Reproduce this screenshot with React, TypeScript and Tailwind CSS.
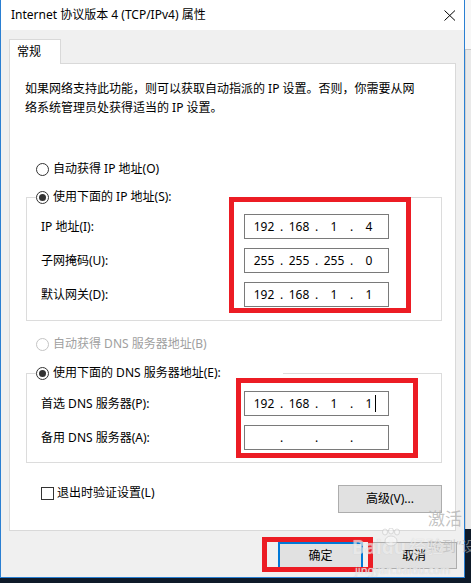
import React, { Fragment } from "react";

function Radio({ checked, disabled }: { checked?: boolean; disabled?: boolean }) {
  return (
    <span
      className={
        "w-[13px] h-[13px] rounded-full border bg-white flex items-center justify-center shrink-0 " +
        (disabled ? "border-[#c4c4c4]" : "border-[#333333]")
      }
    >
      {checked ? <span className="w-[7px] h-[7px] rounded-full bg-[#333333]" /> : null}
    </span>
  );
}

function IpBox({ parts, cursor }: { parts: string[]; cursor?: boolean }) {
  return (
    <div className="w-[145px] h-[25px] border border-[#7a7a7a] bg-white flex items-center pl-[5px] text-[12px] leading-[16px] text-black">
      {parts.map((p, i) => (
        <Fragment key={i}>
          <span className="w-[28px] flex justify-center">
            <span className="relative">
              {p}
              {cursor && i === 3 ? (
                <span className="absolute right-[-4px] top-[-1px] w-px h-[17px] bg-black" />
              ) : null}
            </span>
          </span>
          {i < 3 ? <span className="w-[7px] text-center">.</span> : null}
        </Fragment>
      ))}
    </div>
  );
}

function Row({ label, parts, cursor }: { label: string; parts: string[]; cursor?: boolean }) {
  return (
    <div className="flex items-center h-[25px]">
      <span className="w-[203px] text-[12px] leading-[18px] whitespace-nowrap">{label}</span>
      <IpBox parts={parts} cursor={cursor} />
    </div>
  );
}

export default function App() {
  return (
    <div className="relative w-[471px] h-[583px] overflow-hidden bg-[#0e1a29] font-['Noto_Sans','Noto_Sans_CJK_SC',sans-serif] text-black">
      <div className="flex">
        {/* dialog */}
        <div className="w-[465px] h-[578px] flex flex-col border-l border-r border-b border-[#2a7fd2] bg-[#f0f0f0]">
          {/* title bar */}
          <div className="h-[30px] bg-white flex items-center justify-between pl-[10px] pr-[8px] shrink-0">
            <span className="text-[12px] leading-[18px] whitespace-nowrap">Internet 协议版本 4 (TCP/IPv4) 属性</span>
            <svg width="12" height="11" viewBox="0 0 12 11">
              <path d="M0.5 0.5 L11 10.5 M11 0.5 L0.5 10.5" stroke="#000" strokeWidth="1" fill="none" />
            </svg>
          </div>
          {/* body */}
          <div className="flex flex-col px-[8px] pt-[9px]">
            {/* tab */}
            <div className="relative z-10 w-[52px] h-[25px] -mb-px bg-white border-t border-l border-r border-[#d9d9d9] flex items-center pl-[7px] text-[12px] leading-[18px]">
              常规
            </div>
            {/* panel */}
            <div className="h-[468px] bg-white border border-[#d9d9d9] flex flex-col pl-[16px] pt-[15px]">
              <p className="-ml-px text-[12px] leading-[19px] whitespace-nowrap">
                如果网络支持此功能，则可以获取自动指派的 IP 设置。否则，你需要从网
                <br />
                络系统管理员处获得适当的 IP 设置。
              </p>

              <div className="mt-[43px] ml-[10px] flex items-center gap-[4px] h-[18px] text-[12px] leading-[18px]">
                <Radio />
                <span>自动获得 IP 地址(O)</span>
              </div>

              <fieldset className="mt-[9px] w-[416px] border border-[#dcdcdc] p-0">
                <legend className="ml-[9px] w-[194px] p-0">
                  <div className="flex items-center gap-[4px] h-[20px] text-[12px] leading-[18px]">
                    <Radio checked />
                    <span className="whitespace-nowrap">使用下面的 IP 地址(S):</span>
                  </div>
                </legend>
                <div className="flex flex-col gap-[9px] px-[14px] pt-[7px] pb-[13px]">
                  <Row label="IP 地址(I):" parts={["192", "168", "1", "4"]} />
                  <Row label="子网掩码(U):" parts={["255", "255", "255", "0"]} />
                  <Row label="默认网关(D):" parts={["192", "168", "1", "1"]} />
                </div>
              </fieldset>

              <div className="mt-[14px] ml-[10px] flex items-center gap-[4px] h-[18px] text-[12px] leading-[18px] text-[#a0a0a0]">
                <Radio disabled />
                <span>自动获得 DNS 服务器地址(B)</span>
              </div>

              <fieldset className="mt-[10px] w-[416px] border border-[#dcdcdc] p-0">
                <legend className="ml-[9px] w-[247px] p-0">
                  <div className="flex items-center gap-[4px] h-[20px] text-[12px] leading-[18px]">
                    <Radio checked />
                    <span className="whitespace-nowrap">使用下面的 DNS 服务器地址(E):</span>
                  </div>
                </legend>
                <div className="flex flex-col gap-[9px] px-[14px] pt-[8px] pb-[12px]">
                  <Row label="首选 DNS 服务器(P):" parts={["192", "168", "1", "1"]} cursor />
                  <Row label="备用 DNS 服务器(A):" parts={["", "", "", ""]} />
                </div>
              </fieldset>

              <div className="mt-[21px] w-[416px] pl-[15px] flex justify-between items-start">
                <div className="flex items-center gap-[3px] h-[18px] text-[12px] leading-[18px]">
                  <span className="w-[13px] h-[13px] border border-[#333333] bg-white" />
                  <span>退出时验证设置(L)</span>
                </div>
                <button className="mt-px w-[104px] h-[28px] bg-[#e1e1e1] border border-[#adadad] text-[12px] leading-[18px] flex items-center justify-center">
                  高级(V)...
                </button>
              </div>
            </div>
            {/* bottom buttons */}
            <div className="mt-[11px] -mr-px flex justify-end gap-[8px]">
              <button className="w-[85px] h-[27px] bg-[#e1e1e1] border-2 border-[#0078d7] text-[12px] leading-[18px] flex items-center justify-center">
                确定
              </button>
              <button className="w-[86px] h-[27px] bg-[#e1e1e1] border border-[#adadad] text-[12px] leading-[18px] flex items-center justify-center">
                取消
              </button>
            </div>
          </div>
        </div>
        {/* right strip (desktop behind) */}
        <div className="w-[6px] h-[578px] flex flex-col">
          <div className="h-[50px] bg-[#f7f7f7] border-b border-[#c8c8c8]" />
          <div className="h-[479px] bg-[#e9e9e9] border-l border-[#d0d0d0]" />
          <div className="flex-1 bg-[#0e1a29]" />
        </div>
      </div>

      {/* red annotation boxes */}
      <div className="absolute left-[229px] top-[197px] w-[182px] h-[116px] border-[5px] border-[#ec1c24] pointer-events-none" />
      <div className="absolute left-[236px] top-[378px] w-[182px] h-[80px] border-[5px] border-[#ec1c24] pointer-events-none" />
      <div className="absolute left-[262px] top-[537px] w-[111px] h-[35px] border-[5px] border-[#ec1c24] pointer-events-none" />

      {/* watermarks */}
      <div className="absolute left-[428px] top-[509px] text-[17px] leading-[20px] text-[#b4b4b4]/80 whitespace-nowrap pointer-events-none">
        激活
      </div>
      <div className="absolute left-[428px] top-[537px] w-[43px] overflow-hidden text-[14px] leading-[18px] text-[#b4b4b4]/60 whitespace-nowrap pointer-events-none">
        转到“设
      </div>
      <div className="absolute left-[352px] top-[536px] flex items-end pointer-events-none whitespace-nowrap opacity-70">
        <span className="text-[19px] leading-[22px] font-bold text-white/70 [text-shadow:0_0_1px_#c0c0c0]">Bai</span>
        <span className="relative text-[19px] leading-[22px] font-bold text-white/70 [text-shadow:0_0_1px_#c0c0c0]">
          <svg width="22" height="20" viewBox="0 0 22 20" className="absolute left-[-2px] top-[-8px]">
            <g fill="#ffffff" fillOpacity="0.6" stroke="#c4c4c4" strokeWidth="0.8">
              <ellipse cx="5" cy="4" rx="2.5" ry="3" />
              <ellipse cx="11" cy="3" rx="2.5" ry="3" />
              <ellipse cx="17" cy="4" rx="2.5" ry="3" />
              <ellipse cx="11" cy="13" rx="6" ry="5" />
            </g>
          </svg>
          du
        </span>
        <span className="ml-[3px] text-[17px] leading-[22px] text-white/70 [text-shadow:0_0_1px_#c0c0c0]">经验</span>
      </div>
      <div className="absolute left-[355px] top-[563px] text-[11px] leading-[13px] text-white/60 [text-shadow:0_0_1px_#c0c0c0] whitespace-nowrap pointer-events-none">
        jingyan.baidu.com
      </div>
    </div>
  );
}
